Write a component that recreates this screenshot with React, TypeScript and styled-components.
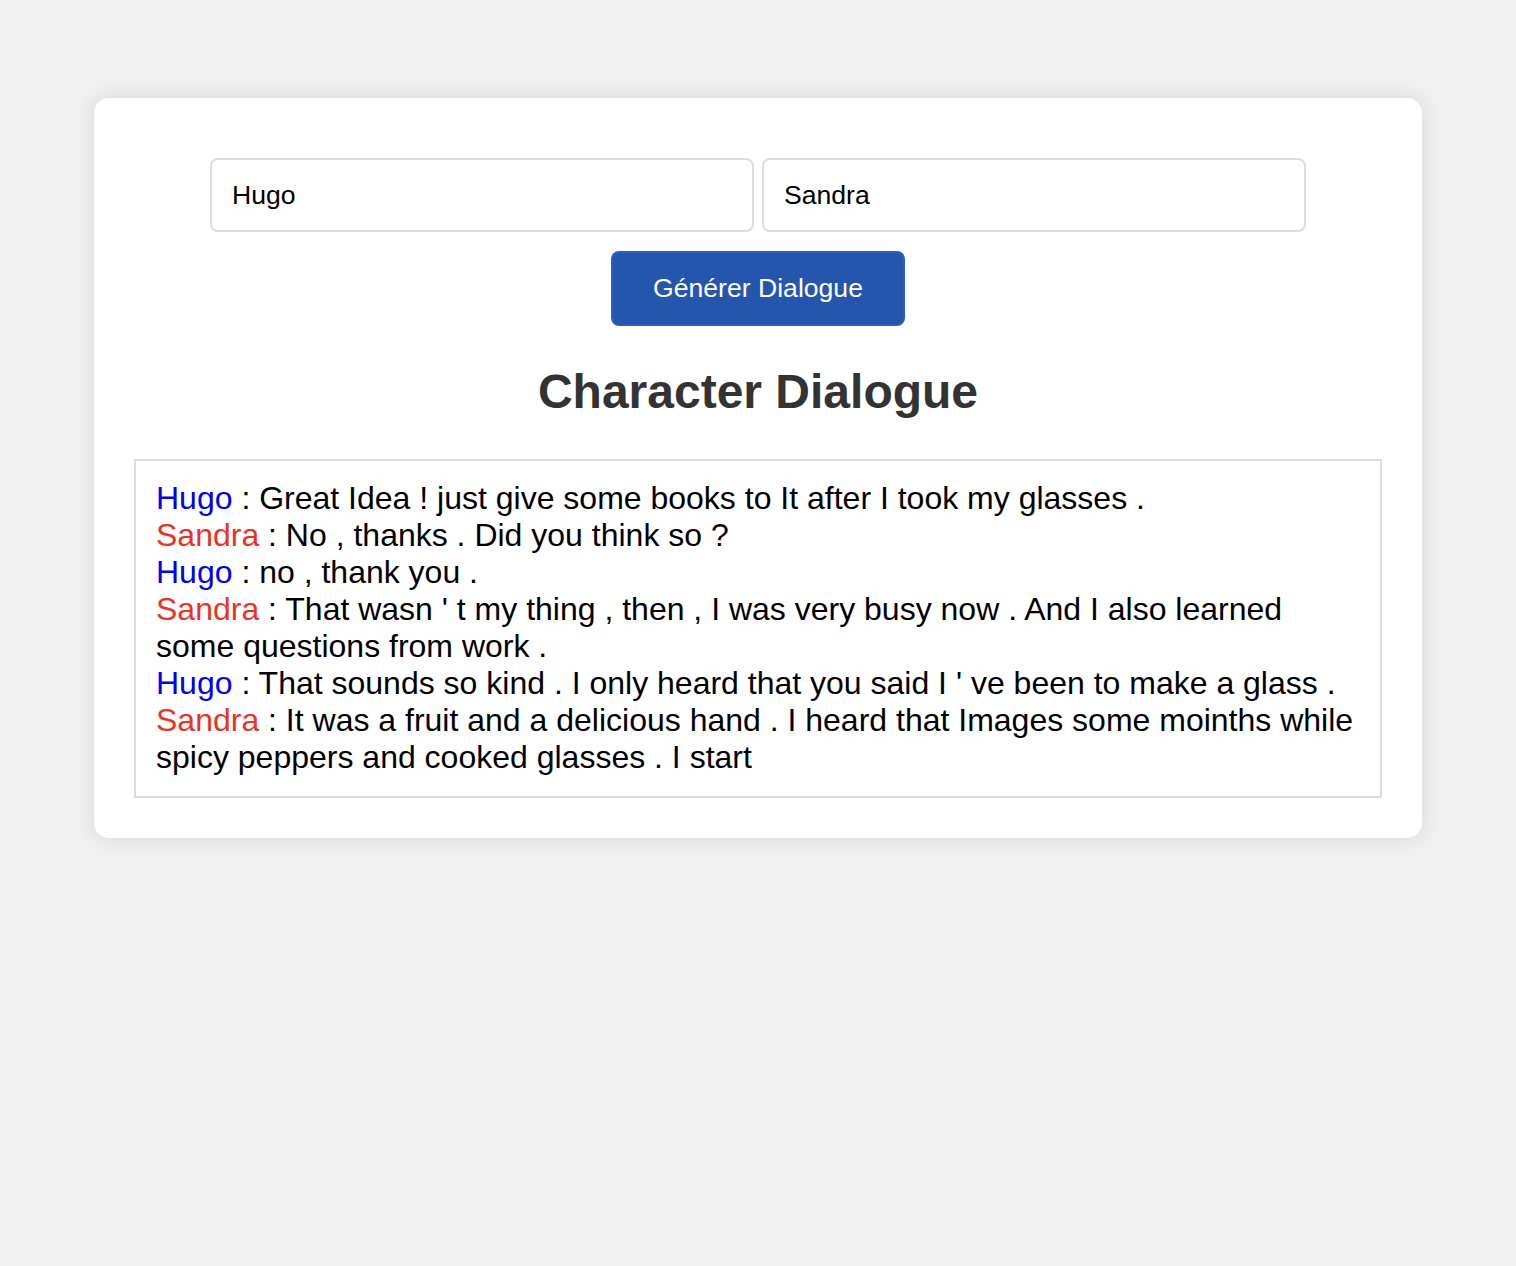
import React from "react";
import styled, { createGlobalStyle } from "styled-components";

const GlobalStyle = createGlobalStyle`
  html, body {
    margin: 0;
    padding: 0;
    background: #f0f0f0;
    font-family: "Liberation Sans", Arial, sans-serif;
  }
`;

const Page = styled.div`
  padding: 98px 0 40px;
  display: flex;
  justify-content: center;
`;

const Card = styled.div`
  box-sizing: border-box;
  width: 1328px;
  background: #ffffff;
  border-radius: 15px;
  box-shadow: 0 0 20px rgba(0, 0, 0, 0.1);
  padding: 60px 40px 40px;
  display: flex;
  flex-direction: column;
  align-items: center;
`;

const InputRow = styled.div`
  display: flex;
  gap: 8px;
  justify-content: center;
`;

const NameInput = styled.input`
  box-sizing: border-box;
  width: 544px;
  height: 74px;
  padding: 0 20px;
  border: 2px solid #dddddd;
  border-radius: 8px;
  font-family: "Liberation Sans", Arial, sans-serif;
  font-size: 26.6px;
  color: #000;
  background: #fff;
  outline: none;
`;

const GenerateButton = styled.button`
  box-sizing: border-box;
  margin-top: 19px;
  width: 294px;
  height: 75px;
  padding: 0;
  border: 2px solid #2b5ec6;
  border-radius: 8px;
  background: #2556ad;
  color: #ffffff;
  font-family: "Liberation Sans", Arial, sans-serif;
  font-size: 26.6px;
  cursor: pointer;
`;

const Title = styled.h1`
  margin: 38px 0 40px;
  font-size: 48px;
  font-weight: bold;
  color: #333333;
  text-align: center;
`;

const DialogueBox = styled.div`
  box-sizing: border-box;
  align-self: stretch;
  border: 2px solid #dddddd;
  padding: 19px 20px 20px;
  font-size: 32px;
  color: #000;
  text-align: left;
`;

const Line = styled.div``;

const Speaker = styled.span<{ $color: string }>`
  color: ${(p) => p.$color};
`;

const lines: { who: "Hugo" | "Sandra"; text: string }[] = [
  { who: "Hugo", text: " : Great Idea ! just give some books to It after I took my glasses ." },
  { who: "Sandra", text: " : No , thanks . Did you think so ?" },
  { who: "Hugo", text: " : no , thank you ." },
  {
    who: "Sandra",
    text: " : That wasn ' t my thing , then , I was very busy now . And I also learned some questions from work .",
  },
  { who: "Hugo", text: " : That sounds so kind . I only heard that you said I ' ve been to make a glass ." },
  {
    who: "Sandra",
    text: " : It was a fruit and a delicious hand . I heard that Images some moinths while spicy peppers and cooked glasses . I start",
  },
];

export default function App() {
  return (
    <>
      <GlobalStyle />
      <Page>
        <Card>
          <InputRow>
            <NameInput defaultValue="Hugo" />
            <NameInput defaultValue="Sandra" />
          </InputRow>
          <GenerateButton>Générer Dialogue</GenerateButton>
          <Title>Character Dialogue</Title>
          <DialogueBox>
            {lines.map((l, i) => (
              <Line key={i}>
                <Speaker $color={l.who === "Hugo" ? "#0000f5" : "#ea3323"}>{l.who}</Speaker>
                {l.text}
              </Line>
            ))}
          </DialogueBox>
        </Card>
      </Page>
    </>
  );
}
